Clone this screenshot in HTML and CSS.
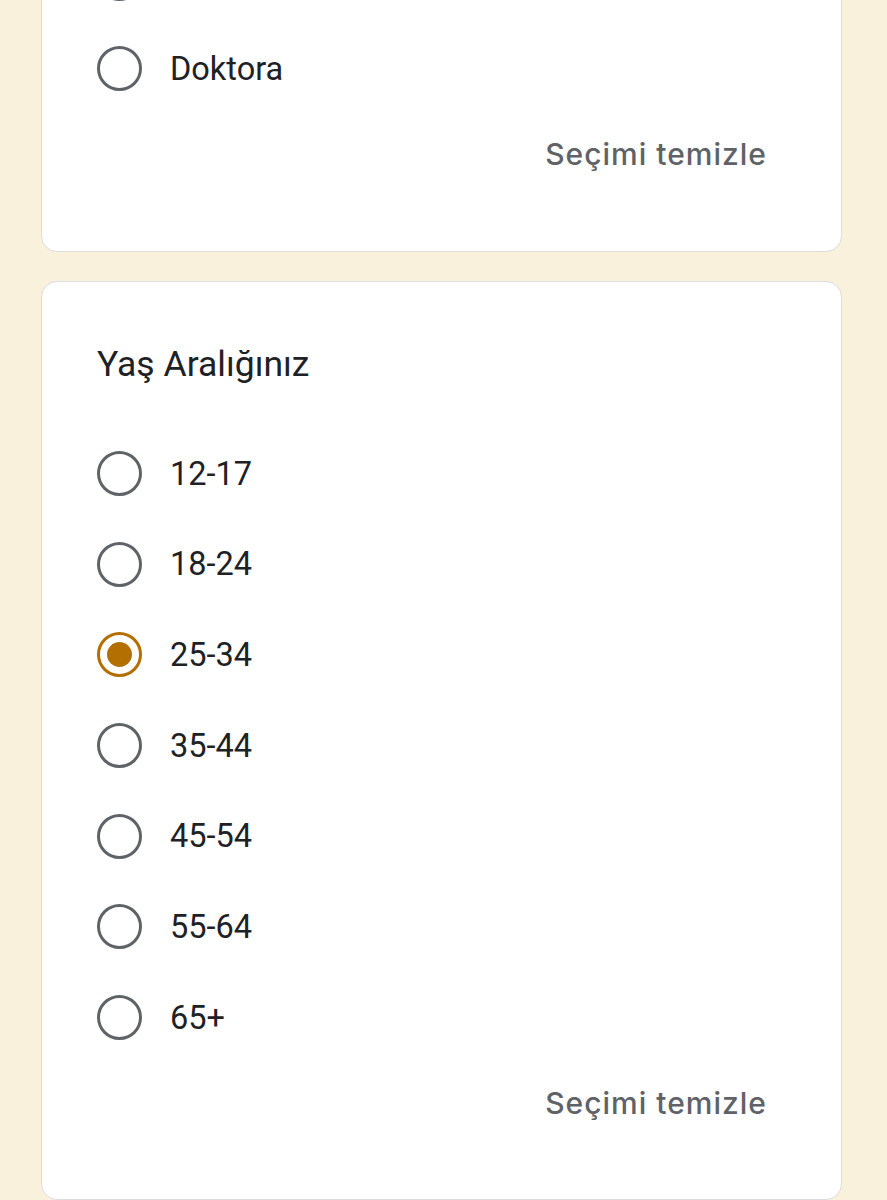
FILE: index.html
```html
<!DOCTYPE html>
<html lang="tr">
<head>
<meta charset="utf-8">
<title>Form</title>
<link rel="stylesheet" href="styles.css">
</head>
<body>
<div class="page">
  <div class="card card-first">
    <div class="options">
      <div class="option"><span class="radio"></span><span class="label">Yüksek lisans</span></div>
      <div class="option"><span class="radio"></span><span class="label">Doktora</span></div>
    </div>
    <div class="clear-row"><span class="clear">Seçimi temizle</span></div>
  </div>
  <div class="card">
    <div class="title">Yaş Aralığınız</div>
    <div class="options">
      <div class="option"><span class="radio"></span><span class="label">12-17</span></div>
      <div class="option"><span class="radio"></span><span class="label">18-24</span></div>
      <div class="option"><span class="radio checked"></span><span class="label">25-34</span></div>
      <div class="option"><span class="radio"></span><span class="label">35-44</span></div>
      <div class="option"><span class="radio"></span><span class="label">45-54</span></div>
      <div class="option"><span class="radio"></span><span class="label">55-64</span></div>
      <div class="option"><span class="radio"></span><span class="label">65+</span></div>
    </div>
    <div class="clear-row"><span class="clear">Seçimi temizle</span></div>
  </div>
</div>
</body>
</html>
```

FILE: styles.css
```css
html, body {
  margin: 0;
  padding: 0;
  background: #faf1dc;
}
body {
  font-family: Roboto, "Noto Sans", sans-serif;
  color: #202124;
  overflow: hidden;
  height: 1200px;
}
.page {
  display: flex;
  flex-direction: column;
  gap: 29px;
  padding-left: 41px;
}
.card {
  width: 801px;
  box-sizing: border-box;
  background: #ffffff;
  border: 1px solid #dadce0;
  border-radius: 16px;
  padding: 0 74px 76px 55px;
}
.card-first {
  margin-top: -92px;
  padding-top: 24px;
  padding-bottom: 77px;
}
.title {
  font-size: 35.5px;
  line-height: 44px;
  padding-top: 60px;
  margin-bottom: 42px;
  color: #202124;
}
.options {
  display: flex;
  flex-direction: column;
}
.option {
  height: 90.67px;
  display: flex;
  align-items: center;
  gap: 28px;
}
.radio {
  width: 45px;
  height: 45px;
  box-sizing: border-box;
  border: 3.5px solid #5f6368;
  border-radius: 50%;
  flex: none;
  display: flex;
  align-items: center;
  justify-content: center;
}
.radio.checked {
  border-color: #b36f02;
}
.radio.checked::after {
  content: "";
  width: 25px;
  height: 25px;
  border-radius: 50%;
  background: #b36f02;
}
.label {
  font-size: 32.5px;
  line-height: 40px;
  color: #202124;
}
.clear-row {
  display: flex;
  justify-content: flex-end;
  margin-top: 20px;
}
.clear {
  font-family: Inter, Roboto, sans-serif;
  font-size: 30px;
  line-height: 40px;
  font-weight: 500;
  color: #5f6368;
  letter-spacing: 1px;
}
```
